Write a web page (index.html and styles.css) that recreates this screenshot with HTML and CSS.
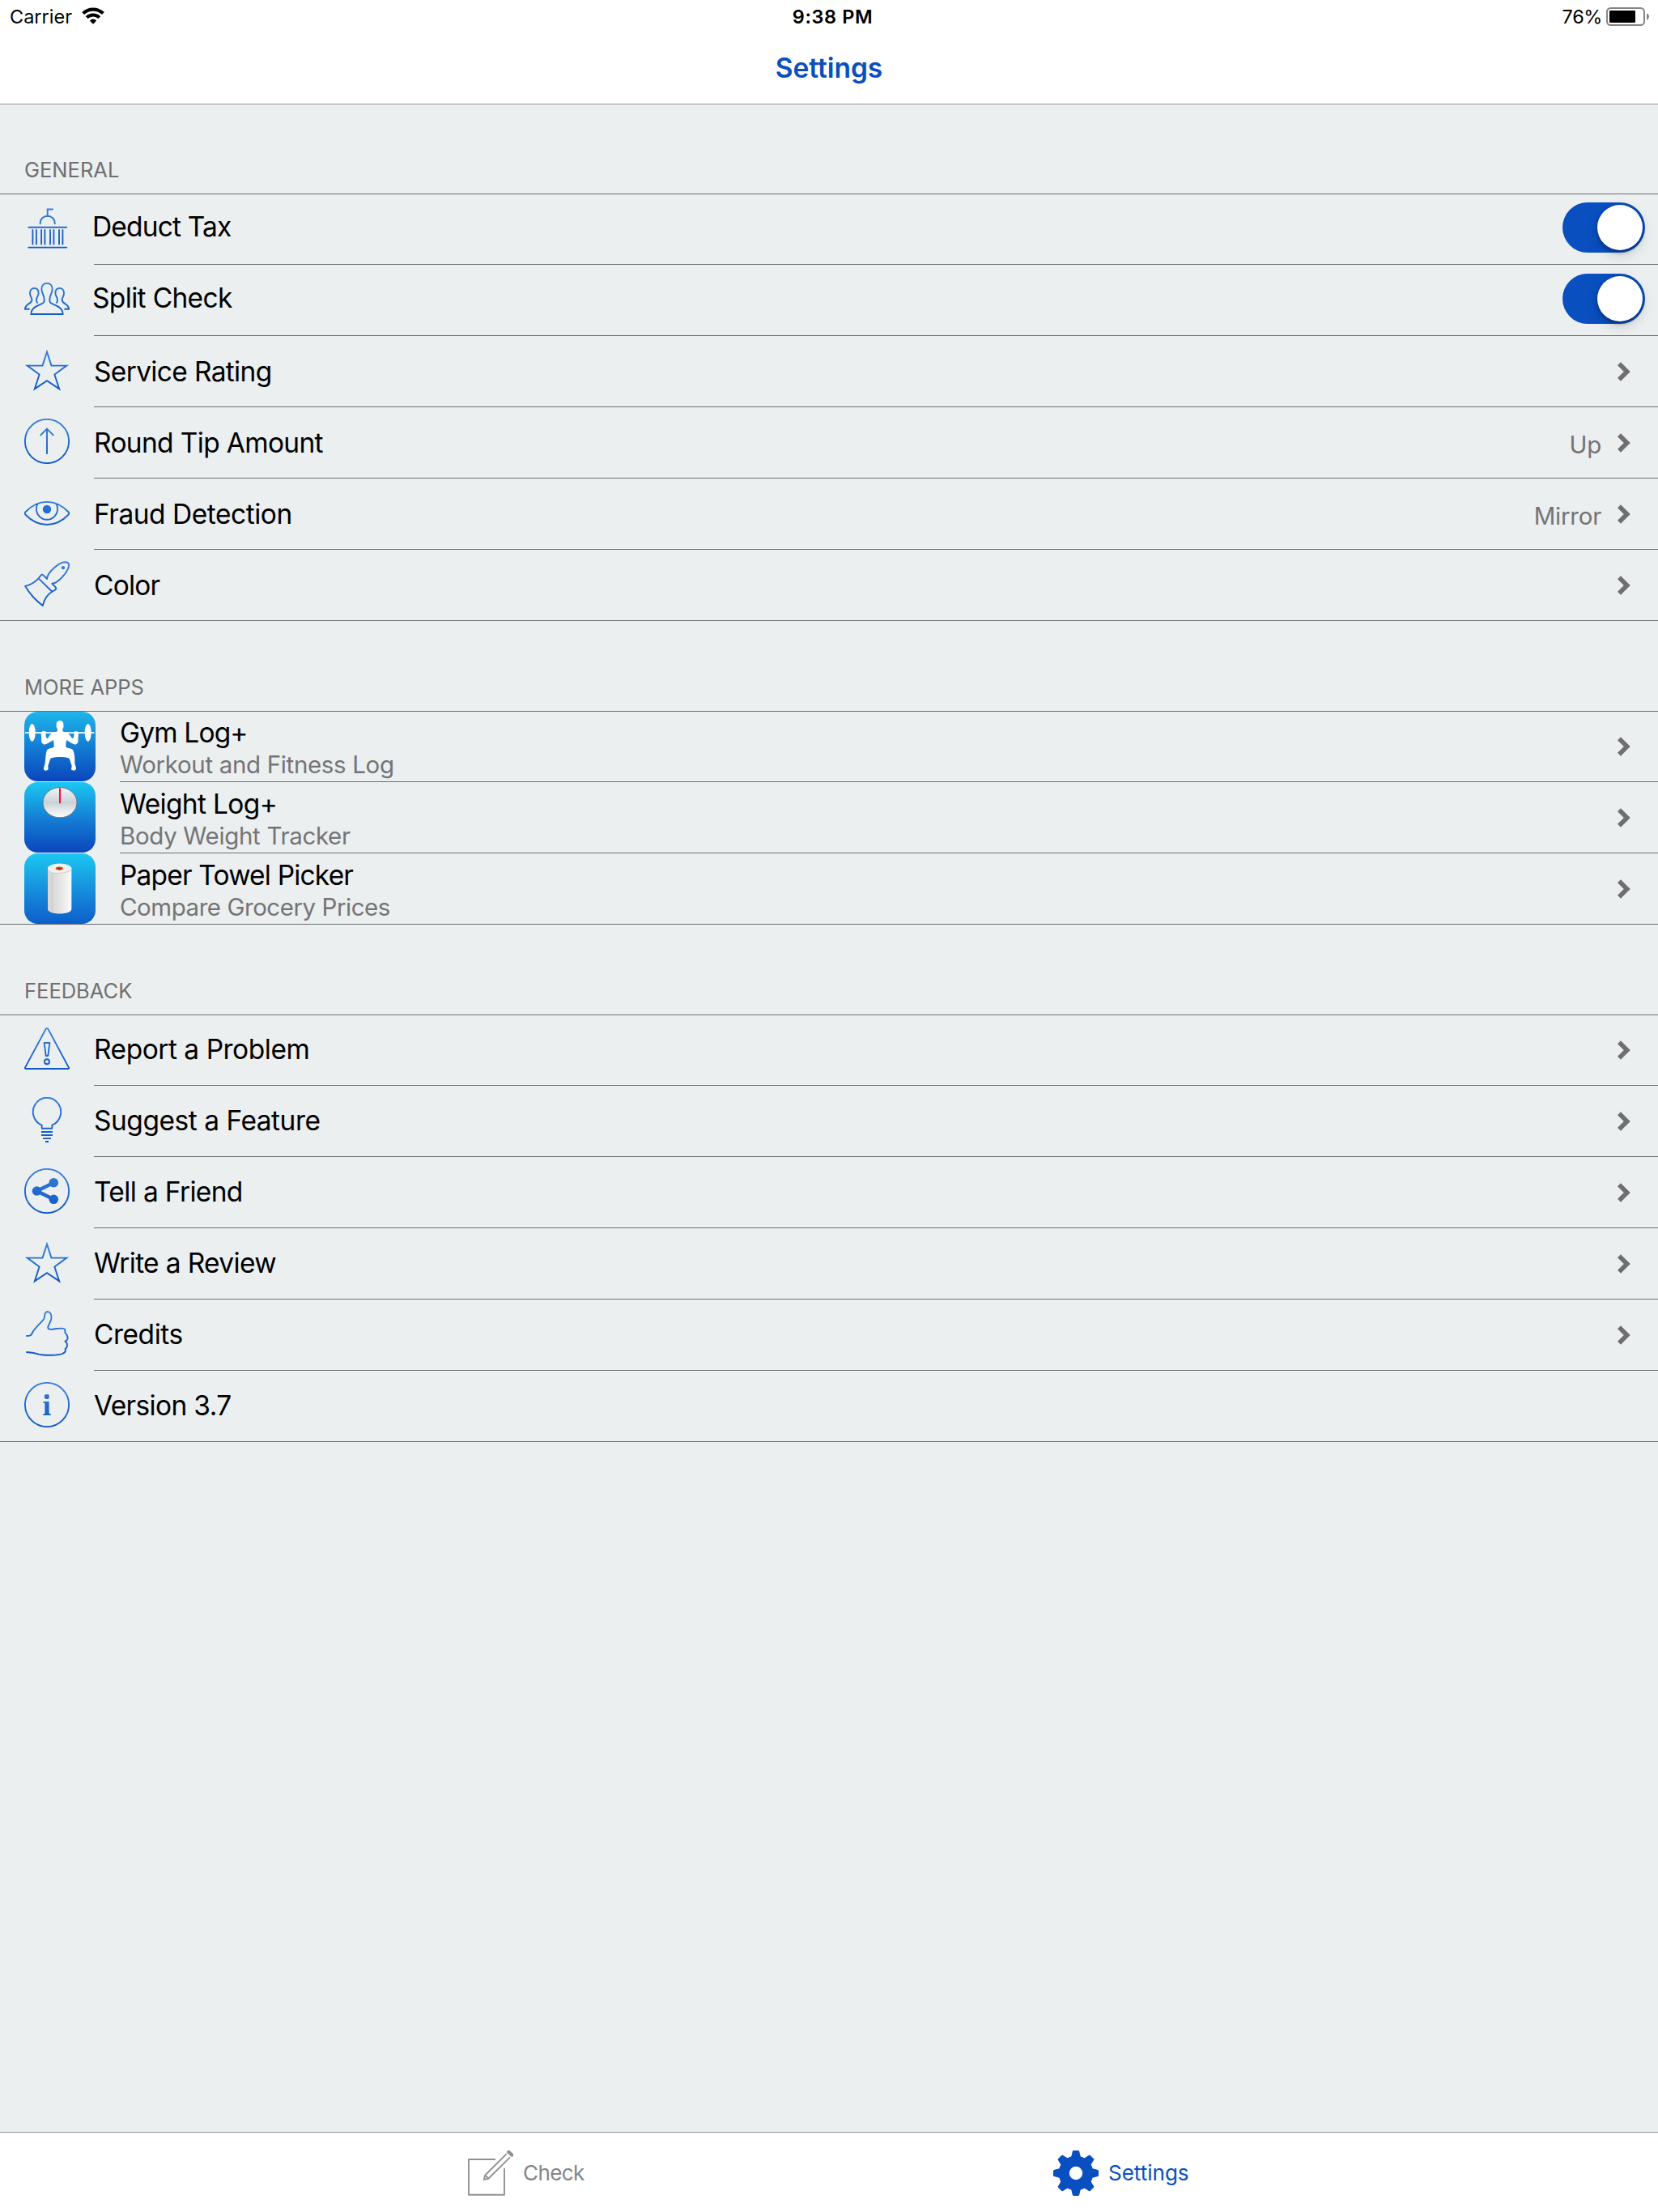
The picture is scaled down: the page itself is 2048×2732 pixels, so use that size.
FILE: index.html
```html
<!DOCTYPE html>
<html lang="en">
<head>
<meta charset="utf-8">
<title>Settings</title>
<link rel="stylesheet" href="styles.css">
</head>
<body>
<svg class="defs" aria-hidden="true">
  <defs>
    <linearGradient id="ink" gradientUnits="userSpaceOnUse" x1="0" y1="0" x2="0" y2="56">
      <stop offset="0" stop-color="#3b80dc"/><stop offset="1" stop-color="#0d56c4"/>
    </linearGradient>
    <linearGradient id="sky" x1="0" y1="0" x2="0" y2="1">
      <stop offset="0" stop-color="#1cc8f2"/><stop offset=".5" stop-color="#1581d6"/><stop offset="1" stop-color="#0a46bc"/>
    </linearGradient>
    <linearGradient id="skyGym" x1="0" y1="0" x2="0" y2="1">
      <stop offset="0" stop-color="#1db6ea"/><stop offset=".5" stop-color="#147dd4"/><stop offset="1" stop-color="#0a46bc"/>
    </linearGradient>
    <linearGradient id="skyRoll" x1="0" y1="0" x2="0" y2="1">
      <stop offset="0" stop-color="#1cc8f2"/><stop offset=".55" stop-color="#168bdb"/><stop offset="1" stop-color="#0d5eca"/>
    </linearGradient>
    <linearGradient id="dial" x1="0" y1="0" x2="0" y2="1">
      <stop offset="0" stop-color="#f4f5f6"/><stop offset=".5" stop-color="#c9d1d8"/><stop offset=".75" stop-color="#e6e9ec"/><stop offset="1" stop-color="#fafafa"/>
    </linearGradient>
    <linearGradient id="paper" x1="0" y1="0" x2="1" y2="0">
      <stop offset="0" stop-color="#d2d2d3"/><stop offset=".5" stop-color="#e4e4e5"/><stop offset="1" stop-color="#fbfbfb"/>
    </linearGradient>
    <symbol id="chevron" viewBox="0 0 16 24"><path d="M2 2.2 11.8 12 2 21.8" fill="none" stroke="#6f6f6f" stroke-width="5.6"/></symbol>
    <symbol id="star" viewBox="0 0 56 56"><path d="M28 5.6 33.5 22.6H52.3L37.4 33.6 43.2 51.4 28 41.2 12.8 51.4 18.6 33.6 3.7 22.6H22.5Z"/></symbol>
  </defs>
</svg>

<header class="topbar">
  <div class="status">
    <div class="status-left">
      <span>Carrier</span>
      <svg class="wifi" viewBox="0 0 30 22"><path d="M2.6 7.6A17.8 17.8 0 0 1 27.4 7.6" stroke-width="4.2"/><path d="M7.2 12.6A11.2 11.2 0 0 1 22.8 12.6" stroke-width="4"/><path class="dot" d="M10.8 16.4Q15 12.4 19.2 16.4L15 20.7Z"/></svg>
    </div>
    <div class="clock">9:38 PM</div>
    <div class="status-right">
      <span class="percent">76%</span>
      <svg class="battery" viewBox="0 0 54 24"><rect x="1" y="1" width="46" height="21" rx="4.5" fill="none" stroke="#858585" stroke-width="2"/><rect x="4" y="4" width="32" height="15" rx="1"/><path d="M50 7.5q3 1.2 3 4t-3 4.5z" fill="#858585"/></svg>
    </div>
  </div>
  <h1>Settings</h1>
</header>

<main>
  <section>
    <h2>GENERAL</h2>
    <ul>
      <li class="row switch-row">
        <svg class="icon" viewBox="0 0 56 56"><path d="M19.7 23.3V22.5A9 8.8 0 0 1 37.7 22.5V23.3M28.7 14V5.5H35M5.3 27.8H52.3M5.3 52.6H52.3M10.4 31V48.6M14.9 31V48.6M21.1 31V48.6M25.4 31V48.6M32 31V48.6M36.4 31V48.6M43 31V48.6M47.4 31V48.6" stroke-linecap="round"/></svg>
        <div class="body"><span class="title tight">Deduct Tax</span><span class="toggle"></span></div>
      </li>
      <li class="row switch-row">
        <svg class="icon" viewBox="0 0 56 56"><path d="M28 8.9C23.5 8.9 21.2 12 21.4 16.5 21.6 21.5 24.4 23.5 24.6 28V31C24.6 36.3 8.6 35 8.4 47H47.6C47.4 35 31.4 36.3 31.4 31V28C31.6 23.5 34.4 21.5 34.6 16.5 34.8 12 32.5 8.9 28 8.9ZM6.6 40.7H1C1 34 9.4 34.5 9.4 29.5 9.4 26.5 7 25 7 21 7 17.3 9 15 12.4 15 15.8 15 17.6 17.3 17.6 21 17.6 25 15 26 15 29.5 15 31.5 15.4 32.5 16.6 33.4M49.4 40.7H55C55 34 46.6 34.5 46.6 29.5 46.6 26.5 49 25 49 21 49 17.3 47 15 43.6 15 40.2 15 38.4 17.3 38.4 21 38.4 25 41 26 41 29.5 41 31.5 40.6 32.5 39.4 33.4"/></svg>
        <div class="body"><span class="title">Split Check</span><span class="toggle"></span></div>
      </li>
      <li class="row">
        <svg class="icon sharp"><use href="#star"/></svg>
        <div class="body"><span class="title">Service Rating</span><svg class="chevron"><use href="#chevron"/></svg></div>
      </li>
      <li class="row">
        <svg class="icon" viewBox="0 0 56 56"><circle cx="28" cy="28" r="27.1"/><path d="M28 13V43M20.3 20.4 28 12.7 35.7 20.4" stroke-linecap="round"/></svg>
        <div class="body"><span class="title">Round Tip Amount</span><span class="value">Up</span><svg class="chevron"><use href="#chevron"/></svg></div>
      </li>
      <li class="row">
        <svg class="icon" viewBox="0 0 56 56"><path d="M1.3 27.5C8 20.5 17 14.9 28 14.9S48 20.5 54.7 27.5Q55.7 29 54.7 30.5C48 37.5 39 43 28 43S8 37.5 1.3 30.5Q.3 29 1.3 27.5ZM16.6 17.2C15.4 19 14.9 21 14.9 23.4A13.1 13.3 0 0 0 41.1 23.4C41.1 21 40.6 19 39.4 17.2"/><circle class="solid" cx="28" cy="24" r="5.2"/></svg>
        <div class="body"><span class="title loose">Fraud Detection</span><span class="value">Mirror</span><svg class="chevron"><use href="#chevron"/></svg></div>
      </li>
      <li class="row">
        <svg class="icon" viewBox="0 0 56 56"><path d="M17.6 21.4C13 26.5 8 29.3 1.2 31 6.5 40 14 48.5 22.8 55 24.5 48 28 41.5 34.4 37.8ZM17.6 21.4 20.3 17.7Q22 16 23.7 17.6L28 22C28 14.5 43 1.2 50 1.2 54 1.2 55.4 2.5 55 6 54 13.5 41.5 27.5 34.3 27.8L38.5 32Q40 34 38.4 35.4L34.4 37.8" stroke-linejoin="round"/><circle class="solid" cx="48" cy="8.2" r="2.1"/></svg>
        <div class="body"><span class="title tight">Color</span><svg class="chevron"><use href="#chevron"/></svg></div>
      </li>
    </ul>
  </section>

  <section>
    <h2>MORE APPS</h2>
    <ul class="apps">
      <li class="row">
        <svg class="app-icon" viewBox="90 176 264 260" preserveAspectRatio="none"><rect x="90" y="176" width="264" height="260" rx="50" fill="url(#skyGym)"/><g fill="#fff"><rect x="93" y="252" width="256" height="5"/><ellipse cx="119" cy="254" rx="12" ry="33"/><ellipse cx="326" cy="254" rx="12" ry="33"/><path d="M222 209C213 209 208 216 209 225 207 231 210 237 213 240V248C208 254 197 252 190 258 184 264 181 271 177 276L171 273C169 264 170 258 170 250L158 248 152 258C154 270 153 282 154 292L164 299C175 296 186 290 197 282 200 292 201 300 199 309 190 313 180 313 175 318 168 332 170 350 167 364 168 374 161 380 162 392L169 397 179 392 178 378C182 370 183 358 188 350 200 345 211 345 222 345S246 345 256 350C261 358 262 370 266 378L264 392 274 397 282 391C283 380 276 374 277 364 277 350 277 332 270 318 264 313 254 313 245 309 243 300 244 292 247 282 258 290 268 296 280 299L289 292C290 282 289 270 291 258L286 249 275 250C274 258 275 264 273 273L267 276C263 271 260 264 254 258 247 252 236 254 232 248V240C235 237 237 231 235 225 236 216 231 209 222 209Z"/></g></svg>
        <div class="body"><div class="labels"><span class="title tight">Gym Log+</span><span class="subtitle">Workout and Fitness Log</span></div><svg class="chevron"><use href="#chevron"/></svg></div>
      </li>
      <li class="row">
        <svg class="app-icon" viewBox="90 437 264 262" preserveAspectRatio="none"><rect x="90" y="437" width="264" height="262" rx="50" fill="url(#sky)"/><ellipse cx="222" cy="513" rx="63" ry="56" fill="url(#dial)" stroke="#5d6b78" stroke-width="2.5"/><rect x="219" y="459" width="6" height="57" fill="#fb1126"/></svg>
        <div class="body"><div class="labels"><span class="title">Weight Log+</span><span class="subtitle">Body Weight Tracker</span></div><svg class="chevron"><use href="#chevron"/></svg></div>
      </li>
      <li class="row">
        <svg class="app-icon" viewBox="90 702 264 262" preserveAspectRatio="none"><rect x="90" y="702" width="264" height="262" rx="50" fill="url(#skyRoll)"/><path d="M177 758V909C177 932 265 932 265 909V758Z" fill="url(#paper)"/><ellipse cx="221" cy="758" rx="44" ry="18" fill="#f0f0f1"/><path d="M177 758C178 768 188 772 193 776V921Q180 917 177 909Z" fill="#d8d8d9"/><path d="M193 924V786Q193 778 201 777C235 775 258 771 264 763" fill="none" stroke="#bdbdbe" stroke-width="2"/><ellipse cx="220" cy="758" rx="14" ry="6.5" fill="#d9501c"/><ellipse cx="220" cy="759" rx="7" ry="4" fill="#ab2c0c"/></svg>
        <div class="body"><div class="labels"><span class="title tight">Paper Towel Picker</span><span class="subtitle narrow">Compare Grocery Prices</span></div><svg class="chevron"><use href="#chevron"/></svg></div>
      </li>
    </ul>
  </section>

  <section class="feedback">
    <h2>FEEDBACK</h2>
    <ul>
      <li class="row">
        <svg class="icon" viewBox="0 0 56 56"><path d="M26.6 3.9Q28 2.3 29.4 3.9L55 51.6Q55.4 53 54.2 53H1.8Q.6 53 1 51.6ZM24.6 21H31.4L29.3 37H26.7Z" stroke-linejoin="round"/><circle cx="28" cy="44.2" r="3"/></svg>
        <div class="body"><span class="title loose">Report a Problem</span><svg class="chevron"><use href="#chevron"/></svg></div>
      </li>
      <li class="row">
        <svg class="icon" viewBox="0 0 56 56"><path d="M21.6 38V34.7A17.2 17.6 0 1 1 34.4 34.7V38M21 38.8H35M21 43H35M21 47H35M23 51.1H33M26 55H30"/></svg>
        <div class="body"><span class="title loose">Suggest a Feature</span><svg class="chevron"><use href="#chevron"/></svg></div>
      </li>
      <li class="row">
        <svg class="icon" viewBox="0 0 56 56"><circle cx="28" cy="28" r="27.1"/><path d="M36.3 17.7 15.5 28 36.3 38.3" stroke-width="4.4"/><g class="solid"><circle cx="15.5" cy="28" r="5.8"/><circle cx="36.3" cy="17.7" r="5.8"/><circle cx="36.3" cy="38.3" r="5.8"/></g></svg>
        <div class="body"><span class="title">Tell a Friend</span><svg class="chevron"><use href="#chevron"/></svg></div>
      </li>
      <li class="row">
        <svg class="icon sharp"><use href="#star"/></svg>
        <div class="body"><span class="title">Write a Review</span><svg class="chevron"><use href="#chevron"/></svg></div>
      </li>
      <li class="row">
        <svg class="icon" viewBox="0 0 56 56"><path d="M2.2 31C6.5 31 8 31 9.2 28.5 12.5 21 20 16 24.3 10 25.8 7.5 24 1.2 28.5 1 32 1 33.7 4.5 33.5 8.5 33.4 13.5 29.5 17 29.2 20.5 29.2 24.5 37 22.3 40 22 44 21.6 50 20.5 50.4 23.5V27L52.4 29.5C54.3 33 53.5 35 52.7 36L50.6 37.7 52.6 40C53.7 43 52.6 45.5 50.6 47.3 51.5 50 50.5 51.5 48 52.5 42 55.5 24 55.2 18 53.6 12 51.5 8 51 2.2 51"/></svg>
        <div class="body"><span class="title loose">Credits</span><svg class="chevron"><use href="#chevron"/></svg></div>
      </li>
      <li class="row">
        <svg class="icon" viewBox="0 0 56 56"><circle cx="28" cy="28" r="27.1"/><g class="solid"><circle cx="27.8" cy="18" r="3.1"/><path d="M23.3 24H30.6V38.5Q30.8 39.6 33 39.8V41H23V39.8Q25.3 39.6 25.4 38.5V26.6Q25.3 25.3 23.3 25.2Z"/></g></svg>
        <div class="body"><span class="title">Version 3.7</span></div>
      </li>
    </ul>
  </section>
</main>

<nav class="tabbar">
  <div class="tab check">
    <svg viewBox="0 0 56 56"><g fill="none" stroke="#929292" stroke-width="1.9" stroke-linejoin="round"><path d="M34 11H1V54.7H45V22"/><path d="M47.8 4.2 21.3 30.5 19.7 36 25.3 34.7 52 8.4M21.3 30.5 25.3 34.7"/><path d="M50.3 1.8 54.4 5.6" stroke-width="4.4" stroke-linecap="round"/></g></svg>
    <span>Check</span>
  </div>
  <div class="tab settings">
    <svg viewBox="-28 -28 56 56"><g fill="#094fc0"><path fill-rule="evenodd" d="M-21.4 0A21.4 21.4 0 1 1 21.4 0 21.4 21.4 0 1 1-21.4 0ZM-8.2 0A8.2 8.2 0 1 0 8.2 0 8.2 8.2 0 1 0-8.2 0Z"/>
      <g id="teeth"><path id="tooth" d="M-3-28H3L4.1-27.2 6-19.5H-6L-4.1-27.2Z"/><use href="#tooth" transform="rotate(45)"/><use href="#tooth" transform="rotate(90)"/><use href="#tooth" transform="rotate(135)"/></g><use href="#teeth" transform="rotate(180)"/></g></svg>
    <span>Settings</span>
  </div>
</nav>
</body>
</html>
```
FILE: styles.css
```css
* { box-sizing: border-box; }

body {
  margin: 0;
  height: 2732px;
  display: flex;
  flex-direction: column;
  background: #ebeff0;
  color: #000;
  font-family: Inter, "Liberation Sans", sans-serif;
}

.defs { display: block; width: 0; height: 0; }

/* Status bar and title */
.topbar {
  height: 129px;
  background: #fff;
  border-bottom: 1px solid #8f9496;
}

.status {
  height: 40px;
  display: grid;
  grid-template-columns: 1fr auto 1fr;
  padding: 0 10px 0 12px;
  font-size: 23.5px;
  line-height: 41px;
}

.status-left, .status-right { display: flex; align-items: flex-start; }
.status-left { gap: 11px; }
.status-right { justify-content: flex-end; gap: 5px; }
.percent { letter-spacing: -0.4px; }
.clock { font-weight: 600; letter-spacing: 0.6px; padding-left: 7px; }

.wifi { width: 30px; height: 22px; margin-top: 9px; fill: none; stroke: #000; }
.wifi .dot { fill: #000; stroke: none; }
.battery { width: 54px; height: 24px; margin-top: 9px; }

h1 {
  margin: 0;
  color: #094fc0;
  font-size: 33.5px;
  font-weight: 600;
  line-height: 88px;
  letter-spacing: -0.05px;
  text-align: center;
}

/* Sections */
main { flex: 1; }
section + section { padding-top: 1px; }

h2 {
  margin: 0;
  height: 110px;
  padding: 64px 30px 0;
  color: #6f6f71;
  font-size: 25.5px;
  font-weight: 400;
  line-height: 34px;
}

ul {
  margin: 0;
  padding: 0;
  list-style: none;
  border-top: 1px solid #6b6e70;
  border-bottom: 1px solid #6b6e70;
}

.row {
  display: grid;
  grid-template-columns: 56px 1fr;
  column-gap: 30px;
  height: 88px;
  padding-left: 30px;
}

.row:first-child { margin-top: -1px; }
.row:last-child { height: 87px; }

.icon {
  width: 56px;
  height: 56px;
  margin-top: 14px;
  fill: none;
  stroke: url(#ink);
  stroke-width: 1.9;
}

.icon.sharp { stroke-miterlimit: 10; }
.icon .solid { fill: url(#ink); stroke: none; }

.body {
  display: flex;
  align-items: center;
  padding-right: 34px;
  border-bottom: 1px solid #6b6e70;
}

.row:last-child .body { border-bottom: 0; }

.title {
  flex: 1;
  font-size: 33.5px;
  line-height: 40px;
  letter-spacing: -0.66px;
}

.title.tight { letter-spacing: -0.83px; }
.title.loose { letter-spacing: -0.48px; }
.feedback .title { padding-bottom: 2px; }

.value {
  margin-right: 20px;
  padding-top: 4px;
  color: #747476;
  font-size: 29.5px;
  letter-spacing: -0.25px;
}

.chevron { width: 16px; height: 24px; }

.switch-row .body { padding-right: 16px; }
.switch-row .title { margin-left: -2px; padding-bottom: 5px; }

.toggle {
  display: flex;
  justify-content: flex-end;
  width: 102px;
  height: 62px;
  margin-top: -4px;
  padding: 3px;
  border-radius: 31px;
  background: #094fc0;
}

.toggle::after {
  content: "";
  width: 56px;
  height: 56px;
  border-radius: 50%;
  background: #fff;
  box-shadow: 0 6px 16px rgba(0, 0, 0, .15), 0 6px 2px rgba(0, 0, 0, .06), 0 1px 4px rgba(0, 0, 0, .3);
}

/* App promotions */
.apps .row { grid-template-columns: 88px 1fr; }
.app-icon { width: 88px; height: 87px; }
.apps .row:first-child .app-icon { height: 86px; margin-top: 1px; }

.labels {
  flex: 1;
  display: flex;
  flex-direction: column;
  padding-top: 4px;
}

.subtitle {
  color: #747476;
  font-size: 29.5px;
  line-height: 38px;
  letter-spacing: -0.34px;
}

.subtitle.narrow { letter-spacing: -0.46px; }

/* Tab bar */
.tabbar {
  height: 99px;
  display: grid;
  grid-template-columns: 722px 1fr;
  column-gap: 1px;
  padding-left: 578px;
  background: #fff;
  border-top: 1px solid #8f9496;
}

.tab { display: flex; align-items: flex-start; padding-top: 22px; font-size: 26px; line-height: 56px; }
.tab svg { width: 56px; height: 56px; }
.tab.check { gap: 12px; color: #858585; letter-spacing: -0.6px; }
.tab.settings { gap: 12px; color: #094fc0; }
```
